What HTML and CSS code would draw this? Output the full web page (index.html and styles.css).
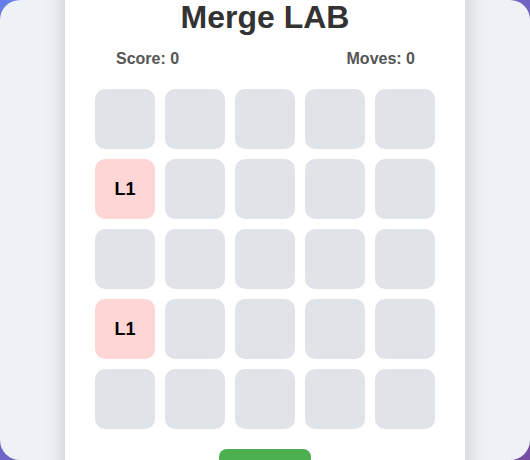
FILE: index.html
```html
<!DOCTYPE html>
<html>
<head>
<meta charset="utf-8">
<link rel="stylesheet" href="styles.css">
</head>
<body>
<div class="panel">
  <div class="card">
    <h1 class="title">Merge LAB</h1>
    <div class="stats">
      <span class="stat">Score: 0</span>
      <span class="stat">Moves: 0</span>
    </div>
    <div class="grid">
      <div class="cell"></div><div class="cell"></div><div class="cell"></div><div class="cell"></div><div class="cell"></div>
      <div class="cell l1">L1</div><div class="cell"></div><div class="cell"></div><div class="cell"></div><div class="cell"></div>
      <div class="cell"></div><div class="cell"></div><div class="cell"></div><div class="cell"></div><div class="cell"></div>
      <div class="cell l1">L1</div><div class="cell"></div><div class="cell"></div><div class="cell"></div><div class="cell"></div>
      <div class="cell"></div><div class="cell"></div><div class="cell"></div><div class="cell"></div><div class="cell"></div>
    </div>
    <div class="actions">
      <button class="restart">Restart</button>
    </div>
  </div>
</div>
</body>
</html>
```

FILE: styles.css
```css
html {
  background: linear-gradient(135deg, #667eea 0%, #764ba2 100%);
  height: 100%;
}
body {
  margin: 0;
  height: 460px;
  overflow: hidden;
  font-family: "Liberation Sans", Arial, sans-serif;
}
.panel {
  height: 460px;
  border-radius: 20px;
  background: #eef1f6;
  overflow: hidden;
  display: flex;
  justify-content: center;
}
.card {
  width: 340px;
  padding: 30px;
  margin-top: -31px;
  background: #ffffff;
  box-shadow: 0 0 20px rgba(0, 0, 0, 0.18);
  align-self: flex-start;
}
.title {
  margin: 0;
  font-size: 32px;
  font-weight: bold;
  color: #333333;
  text-align: center;
}
.stats {
  display: flex;
  justify-content: space-between;
  padding: 0 20px 0 21px;
  margin: 14px 0 21px;
}
.stat {
  font-size: 16px;
  font-weight: bold;
  color: #555555;
}
.grid {
  display: grid;
  grid-template-columns: repeat(5, 60px);
  grid-auto-rows: 60px;
  gap: 10px;
}
.cell {
  background: #e0e3e8;
  border-radius: 10px;
  display: flex;
  align-items: center;
  justify-content: center;
  font-size: 18px;
  font-weight: bold;
  color: #000000;
}
.cell.l1 {
  background: #ffd6d6;
}
.actions {
  display: flex;
  justify-content: center;
  margin-top: 20px;
}
.restart {
  background: #4caf50;
  color: #ffffff;
  border: none;
  border-radius: 8px;
  padding: 9px 20px;
  font-family: "Liberation Sans", Arial, sans-serif;
  font-size: 16px;
}
```
